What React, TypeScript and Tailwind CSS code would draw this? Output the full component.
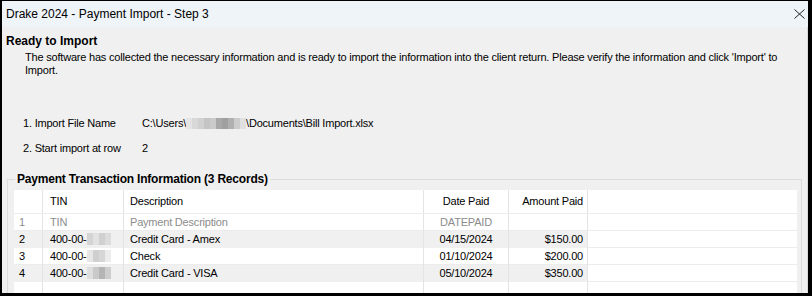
import React from "react";

const sans = { fontFamily: '"Liberation Sans", Arial, sans-serif' };

function Blur({ cells, h = 12 }: { cells: string[]; h?: number }) {
  return (
    <span className="inline-flex align-middle" style={{ height: h }}>
      {cells.map((c, i) => (
        <span key={i} className="w-[6px] h-full" style={{ background: c }} />
      ))}
    </span>
  );
}

const cols = "grid grid-cols-[29px_81px_300px_85px_79px_214px]";

type Row = { n: string; tin: React.ReactNode; desc: string; date: string; amt: string; gray?: boolean; muted?: boolean };

function TinBlur({ cells }: { cells: string[] }) {
  return (
    <span className="inline-flex items-center">
      400-00-
      <Blur cells={cells} h={12} />
    </span>
  );
}

export default function App() {
  const rows: Row[] = [
    { n: "1", tin: "TIN", desc: "Payment Description", date: "DATEPAID", amt: "", muted: true },
    { n: "2", tin: <TinBlur cells={["#d4d4d4", "#e2e2e2", "#d0d0d0", "#dcdcdc"]} />, desc: "Credit Card - Amex", date: "04/15/2024", amt: "$150.00", gray: true },
    { n: "3", tin: <TinBlur cells={["#e6e6e6", "#cfcfcf", "#d6d6d6", "#ececec"]} />, desc: "Check", date: "01/10/2024", amt: "$200.00" },
    { n: "4", tin: <TinBlur cells={["#dedede", "#c9c9c9", "#b4b4b4", "#cdcdcd"]} />, desc: "Credit Card - VISA", date: "05/10/2024", amt: "$350.00", gray: true },
    { n: "", tin: "", desc: "", date: "", amt: "" },
  ];
  const line = "border-r border-[#e4e4e4]";
  return (
    <div
      className="w-[812px] h-[296px] overflow-hidden bg-black border-t border-l-2 border-r-[4px] border-b-[3px] border-black flex flex-col text-[11px] tracking-[-0.2px] text-black"
      style={sans}
    >
      <div className="h-[26px] shrink-0 bg-[#eff4f9] flex items-center justify-between pl-[4px] pr-[3px]">
        <span className="text-[12px] leading-none tracking-normal">Drake 2024 - Payment Import - Step 3</span>
        <svg width="11" height="10" viewBox="0 0 11 10">
          <path d="M0.5 0.5 L10.5 9.5 M10.5 0.5 L0.5 9.5" stroke="#222" strokeWidth="1" fill="none" />
        </svg>
      </div>
      <div className="flex-1 bg-[#f0f0f0] border-r border-[#dadada] flex flex-col">
        <div className="pl-[4px] pt-[8px] font-bold text-[12px] leading-[13px] tracking-normal">Ready to Import</div>
        <p className="ml-[23px] w-[775px] leading-[13px] mt-[3px]">
          The software has collected the necessary information and is ready to import the information into the client return. Please verify the information and click 'Import' to Import.
        </p>
        <div className="ml-[21px] mt-[40px] flex flex-col gap-[12px] leading-[13px]">
          <div className="flex">
            <span className="w-[119px]">1. Import File Name</span>
            <span className="inline-flex items-center">
              C:\Users\
              <Blur cells={["#e4e4e4", "#d8d8d8", "#d0d0d0", "#c4c4c4", "#cacaca", "#a8a8a8", "#a0a0a0", "#b0b0b0", "#cccccc", "#e0e0e0"]} h={11} />
              \Documents\Bill Import.xlsx
            </span>
          </div>
          <div className="flex">
            <span className="w-[119px]">2. Start import at row</span>
            <span>2</span>
          </div>
        </div>
        <fieldset className="mx-[5px] mt-[17px] border border-[#dcdcdc] pl-[6px] pr-[4px] pt-[3px] min-w-0">
          <legend className="ml-[1px] px-[2px] font-bold text-[12px] leading-[15px]">Payment Transaction Information (3 Records)</legend>
          <div className="bg-white">
            <div className={`${cols} h-[23px] items-center`}>
              <div className={`${line} h-full`} />
              <div className={`${line} h-full flex items-center pl-[7px]`}>TIN</div>
              <div className={`${line} h-full flex items-center pl-[6px]`}>Description</div>
              <div className={`${line} h-full flex items-center justify-center`}>Date Paid</div>
              <div className={`${line} h-full flex items-center justify-end pr-[4px]`}>Amount Paid</div>
              <div className="h-full" />
            </div>
            {rows.map((r, i) => (
              <div key={i} className={`${cols} h-[17px] border-t border-[#ececec] ${r.muted ? "text-[#8c8c8c]" : ""}`}>
                <div className={`${line} ${r.gray ? "bg-[#f0f0f0]" : ""} flex items-center pl-[5px]`}>{r.n}</div>
                <div className={`${line} ${r.gray ? "bg-[#f0f0f0]" : ""} flex items-center pl-[7px]`}>{r.tin}</div>
                <div className={`${line} ${r.gray ? "bg-[#f0f0f0]" : ""} flex items-center pl-[6px]`}>{r.desc}</div>
                <div className={`${line} ${r.gray ? "bg-[#f0f0f0]" : ""} flex items-center justify-center`}>{r.date}</div>
                <div className={`${line} ${r.gray ? "bg-[#f0f0f0]" : ""} flex items-center justify-end pr-[4px]`}>{r.amt}</div>
                <div />
              </div>
            ))}
            <div className="h-[20px]" />
          </div>
        </fieldset>
      </div>
    </div>
  );
}
